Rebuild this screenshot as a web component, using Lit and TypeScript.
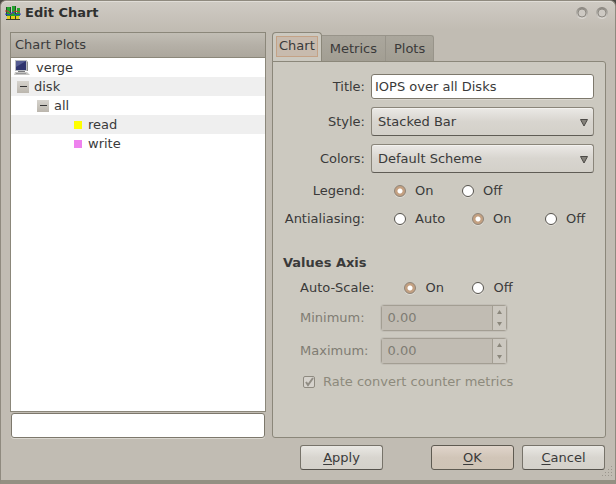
import { LitElement, html, css, svg } from "lit";
import { customElement } from "lit/decorators.js";

const base = css`
  * { box-sizing: border-box; }
  button, input, select { font: inherit; color: inherit; margin: 0; }
`;

@customElement("app-root")
export class AppRoot extends LitElement {
  static styles = [base, css`
    :host { display: block; background: #4c4a45; }
    .window {
      min-height: 100vh; display: flex; flex-direction: column;
      font: 13px/16px "DejaVu Sans", sans-serif; color: #3a3a3a;
      background: linear-gradient(#cfcbc4, #c1bcb3 28px);
      border: 1px solid #8f8a7f; border-bottom: 4px solid #949083;
      border-radius: 6px 6px 0 0;
      box-shadow: inset 0 1px #e0ddd7;
      overflow: hidden;
    }
    .titlebar { display: flex; align-items: center; height: 25px; padding: 0 7px 2px 4px; gap: 4px; }
    .titlebar h1 { flex: 1; margin: 0; font-size: 13px; line-height: 16px; color: #2f302f; }
    .winbtn { display: flex; padding: 0; border: 0; background: none; margin-left: 4px; }
    .body { flex: 1; display: grid; grid-template-columns: 256fr 334fr; gap: 0 6px; padding: 6px 9px 0; }
    .left { display: flex; flex-direction: column; min-width: 0; }
    .tree { flex: 1; background: #fff; border: 1px solid #8b877a; }
    .tree h2 {
      margin: 0; height: 25px; padding: 4px; font-weight: 400; font-size: 13px; line-height: 16px;
      background: linear-gradient(#c2beb5, #b5b0a7 50%, #aca79d); border-bottom: 1px solid #8b877a;
    }
    .tree ul { list-style: none; margin: 0; padding: 0; }
    .tree li { display: flex; align-items: center; height: 19px; }
    .tree li:nth-child(even) { background: #efefef; }
    .host { padding-left: 3px; gap: 6px; }
    .l1 { padding-left: 6px; gap: 5px; }
    .l2 { padding-left: 26px; gap: 5px; }
    .leaf { padding-left: 63px; gap: 6px; }
    .toggle {
      width: 12px; height: 12px; padding: 0; border: 0; display: flex; align-items: center; justify-content: center;
      background: linear-gradient(#d6d3cd, #bbb6ad);
    }
    .toggle::before { content: ""; width: 7px; height: 1px; background: #333; }
    .chip { width: 8px; height: 8px; }
    .yellow { background: #ff0; }
    .violet { background: #ee82ee; }
    .entry {
      background: #fff; border: 1px solid #7d786c; border-radius: 3px; box-shadow: 0 1px #dad7d0;
      height: 25px; padding: 0 3px; width: 100%; outline: 0; min-width: 0;
    }
    .filter { margin: 1px 1px 0; width: auto; }
    .right { display: flex; flex-direction: column; min-width: 0; }
    .tabs { display: flex; align-items: flex-end; height: 30px; margin-bottom: -1px; }
    .tab {
      height: 26px; margin-bottom: 1px; padding: 0 8px; border: 1px solid #98948a; border-width: 1px 1px 0 0;
      background: linear-gradient(#aba79d, #a29e93);
    }
    .tab:last-child { border-radius: 0 3px 0 0; }
    .tab.active {
      height: 30px; margin: 0; padding: 3px; border: 1px solid #8b877a; border-bottom: 0; border-radius: 4px 4px 0 0;
      background: #ccc9c0; display: flex;
    }
    .focus { border: 1px solid #c4a286; background: #c8bbae; padding: 1px 2px; height: 21px; }
    .panel {
      flex: 1; border: 1px solid #8b877a; border-radius: 0 3px 3px 3px; background: #ccc9c0; padding: 12px 11px 12px 10px;
      display: flex; flex-direction: column;
    }
    .form { display: grid; grid-template-columns: 82px 1fr; gap: 8px 6px; align-items: center; }
    .lab { text-align: right; }
    .combo { position: relative; display: block; }
    .combo select {
      appearance: none; width: 100%; height: 29px; padding: 0 24px 0 6px; border: 1px solid #8a857a; border-bottom-color: #5f5c55;
      border-radius: 3px; background: linear-gradient(#ebe9e6, #d8d5cf 50%, #d3d0c9); outline: 0; box-shadow: inset 0 1px #f3f2ef;
    }
    .combo svg { position: absolute; right: 6px; top: 12px; pointer-events: none; }
    .radios { display: grid; align-items: center; height: 20px; padding-left: 23px; }
    .two { grid-template-columns: 68px auto; }
    .three { grid-template-columns: 78px 73px auto; }
    .radios label { display: flex; align-items: center; gap: 9px; white-space: nowrap; }
    input[type="radio"] {
      appearance: none; width: 12px; height: 12px; border-radius: 50%; background: #fff; border: 1px solid #55524c;
      box-shadow: 0 1px #dedbd4;
    }
    input[type="radio"]:checked {
      border-color: #8f8478; background: radial-gradient(circle, #fff 2px, #c3a081 3px);
    }
    .panel h3 { margin: 26px 0 7px; font-size: 13px; line-height: 16px; }
    .axis { display: grid; grid-template-columns: auto 1fr; gap: 7px; align-items: center; padding-left: 17px; justify-items: start; }
    .dim { color: #7f7c73; }
    .spin { display: flex; width: 126px; height: 26px; border: 1px solid #a39e93; border-radius: 3px; box-shadow: 0 0 0 1px #c2beb6; }
    .spin input { flex: 1; min-width: 0; border: 0; padding: 0 5px; background: #c1bcb3; color: #7f7c73; }
    .steps { width: 14px; display: flex; flex-direction: column; border-left: 1px solid #a39e93; }
    .steps button { flex: 1; padding: 0; border: 0; background: #ccc8c0; display: flex; align-items: center; justify-content: center; }
    .check { display: flex; align-items: center; gap: 8px; padding-left: 20px; margin-top: 10px; color: #8d8a7c; }
    .check input {
      appearance: none; width: 12px; height: 12px; border: 1px solid #8e8a80; border-radius: 2px; background: #d6d3cd;
    }
    .box { position: relative; display: flex; }
    .box svg { position: absolute; left: 1px; top: 1px; pointer-events: none; }
    .footer { display: flex; justify-content: flex-end; gap: 8px; padding: 7px 10px 10px; position: relative; }
    .push {
      width: 83px; height: 25px; padding: 0; border: 1px solid #77736a; border-bottom-color: #55524c; border-radius: 3px;
      background: linear-gradient(#eae8e4, #d8d5cf 50%, #d4d1ca);
    }
    .push.default { background: linear-gradient(#e0d5cb, #d1c5b8 50%, #cfc4b6); border-color: #5f5b52; }
    .apply { margin-right: 40px; }
    u { text-underline-offset: 2px; text-decoration-thickness: 1px; }
    .grip { position: absolute; right: 1px; bottom: 2px; }
  `];

  private arrow = (up: boolean) => html`<svg width="5" height="4" viewBox="0 0 5 4"><path d=${up ? "M0 4L2.5 0L5 4Z" : "M0 0L5 0L2.5 4Z"} fill="#8b877c"/></svg>`;
  private winButton = (label: string) => html`
    <button class="winbtn" aria-label=${label}><svg width="12" height="12" viewBox="0 0 12 12">
      <defs><linearGradient id="rim" x2="0" y2="1"><stop stop-color="#85817a"/><stop offset="1" stop-color="#dedbd6"/></linearGradient></defs>
      <circle cx="6" cy="6" r="6" fill="url(#rim)"/><circle cx="6" cy="6" r="4" fill="#cdc9c3" stroke="#8e8a83"/></svg></button>`;
  private combo = (id: string, value: string) => html`
    <span class="combo"><select id=${id}><option>${value}</option></select>
      <svg width="8" height="8" viewBox="0 0 8 8"><path d="M.5 .5H7.5L4 7Z" fill="#85827b" stroke="#4c4a46"/></svg></span>`;
  private radios = (name: string, opts: string[], on: string) => html`
    <div class="radios ${opts.length === 3 ? "three" : "two"}" role="radiogroup" aria-labelledby=${name}>
      ${opts.map((o) => html`<label><input type="radio" name=${name} .checked=${o === on}>${o}</label>`)}
    </div>`;
  private spin = (id: string) => html`
    <div class="spin"><input id=${id} type="text" value="0.00" disabled>
      <div class="steps"><button disabled aria-label="Increase">${this.arrow(true)}</button><button disabled aria-label="Decrease">${this.arrow(false)}</button></div></div>`;

  render() {
    return html`
      <div class="window">
        <header class="titlebar">
          <svg width="16" height="16" viewBox="0 0 16 16">
            <path d="M2 2h3v6h2V1h3v7h2V3h3v8H2z" fill="#23a52d"/>
            <path d="M1 2h1v9H1zM5 2h1v8H5zM10 1h1v8h-1z" fill="#24502a"/>
            <path d="M0 6h3l3 3 4-3 5 1" stroke="#d03434" fill="none"/>
            <path d="M0 9l4 1 4-3 3 3 5-1" stroke="#2b40c8" fill="none"/>
            <path d="M2 11h12v3H2z" fill="#e3cf1c"/><path d="M1 14h14v1H1zM5 11h1v3H5zM10 11h1v3h-1z" fill="#3a3a24"/>
          </svg>
          <h1>Edit Chart</h1>
          ${this.winButton("Maximize")}${this.winButton("Close")}
        </header>
        <main class="body">
          <section class="left">
            <div class="tree">
              <h2>Chart Plots</h2>
              <ul>
                <li class="host">
                  <svg width="16" height="16" viewBox="0 0 16 16">
                    <path d="M1 0h12v11H1z" fill="#b9bcc0"/><path d="M2 1h10v9H2z" fill="#30356e"/><path d="M2 1h10L2 7z" fill="#555c92"/>
                    <path d="M13 1l1 1v9h-1z" fill="#8f8f8c"/><path d="M4 11h7v1H4z" fill="#77777a"/>
                    <path d="M1 12h12l3 3H0z" fill="#c6c6c3"/><path d="M2 13h10v1H2z" fill="#98989a"/>
                  </svg>verge</li>
                <li class="l1"><button class="toggle" aria-label="Collapse disk"></button>disk</li>
                <li class="l2"><button class="toggle" aria-label="Collapse all"></button>all</li>
                <li class="leaf"><span class="chip yellow"></span>read</li>
                <li class="leaf"><span class="chip violet"></span>write</li>
              </ul>
            </div>
            <input class="entry filter" type="text" aria-label="Metric name">
          </section>
          <section class="right">
            <div class="tabs" role="tablist">
              <button class="tab active" role="tab" aria-selected="true"><span class="focus">Chart</span></button>
              <button class="tab" role="tab">Metrics</button>
              <button class="tab" role="tab">Plots</button>
            </div>
            <div class="panel" role="tabpanel">
              <div class="form">
                <label class="lab" for="title">Title:</label><input id="title" class="entry" type="text" value="IOPS over all Disks">
                <label class="lab" for="style">Style:</label>${this.combo("style", "Stacked Bar")}
                <label class="lab" for="colors">Colors:</label>${this.combo("colors", "Default Scheme")}
                <span class="lab" id="legend">Legend:</span>${this.radios("legend", ["On", "Off"], "On")}
                <span class="lab" id="aa">Antialiasing:</span>${this.radios("aa", ["Auto", "On", "Off"], "On")}
              </div>
              <h3>Values Axis</h3>
              <div class="axis">
                <span id="auto">Auto-Scale:</span>${this.radios("auto", ["On", "Off"], "On")}
                <label class="dim" for="min">Minimum:</label>${this.spin("min")}
                <label class="dim" for="max">Maximum:</label>${this.spin("max")}
              </div>
              <label class="check"><span class="box"><input type="checkbox" checked disabled>
                <svg width="10" height="10" viewBox="0 0 10 10"><path d="M2 5l2 3L9 1" stroke="#918d84" stroke-width="2" fill="none"/></svg></span>Rate convert counter metrics</label>
            </div>
          </section>
        </main>
        <footer class="footer">
          <button class="push apply"><u>A</u>pply</button>
          <button class="push default"><u>O</u>K</button>
          <button class="push"><u>C</u>ancel</button>
          <svg class="grip" width="12" height="12" viewBox="0 0 12 12" fill="#9b968d">
            ${[[9, 0], [6, 3], [9, 3], [3, 6], [6, 6], [9, 6], [0, 9], [3, 9], [6, 9], [9, 9]].map(([x, y]) => svg`<rect x=${x} y=${y} width="1" height="1"/>`)}
          </svg>
        </footer>
      </div>`;
  }
}
